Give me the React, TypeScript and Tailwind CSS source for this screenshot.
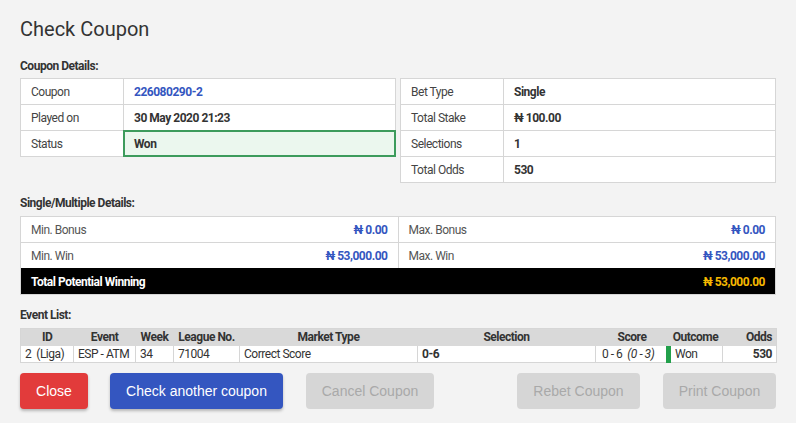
import React from "react";

const cond = "font-['Roboto',sans-serif] tracking-[-0.03em]";

type Row = { k: string; v: React.ReactNode; cls?: string };

function KV({ rows }: { rows: Row[] }) {
  return (
    <div className="border border-[#d6d6d6] bg-white">
      {rows.map((r, i) => (
        <div key={i} className={`flex ${i > 0 ? "h-[26px] border-t border-[#d6d6d6]" : "h-[25px]"}`}>
          <div className="w-[103px] shrink-0 border-r border-[#d6d6d6] px-[10px] flex items-center text-[12px] text-[#444]">{r.k}</div>
          <div className={`flex-1 px-[10px] flex items-center text-[12px] font-bold ${r.cls ?? "text-[#333]"}`}>{r.v}</div>
        </div>
      ))}
    </div>
  );
}

function Money({ label, value }: { label: string; value: string }) {
  return (
    <div className="flex-1 flex items-center justify-between px-[10px]">
      <span className="text-[12px] text-[#555]">{label}</span>
      <span className="text-[12px] font-bold text-[#3456c0]">{value}</span>
    </div>
  );
}

export default function App() {
  const th = "text-[12px] leading-[16px] font-bold text-[#333] px-[4px] py-0 h-[17px]";
  const td = "text-[12px] leading-[16px] text-[#333] px-[4px] py-0 h-[17px] border-l border-[#d6d6d6]";
  return (
    <div className={`w-[796px] h-[423px] bg-[#f3f3f3] px-[20px] ${cond}`}>
      <h1 className="pt-[15px] h-[46px] text-[20px] leading-[28px] text-[#333] font-['Roboto',sans-serif] tracking-normal">Check Coupon</h1>

      <div className="mt-[13px] text-[12px] font-bold text-[#333] leading-[14px]">Coupon Details:</div>
      <div className="mt-[5px] flex gap-[4px] items-start">
        <div className="w-[376px]">
          <div className="border border-[#d6d6d6] bg-white">
            <div className="flex h-[25px]">
              <div className="w-[103px] shrink-0 border-r border-[#d6d6d6] px-[10px] flex items-center text-[12px] text-[#444]">Coupon</div>
              <div className="flex-1 px-[10px] flex items-center text-[12px] font-bold text-[#3456c0]">226080290-2</div>
            </div>
            <div className="flex h-[26px] border-t border-[#d6d6d6]">
              <div className="w-[103px] shrink-0 border-r border-[#d6d6d6] px-[10px] flex items-center text-[12px] text-[#444]">Played on</div>
              <div className="flex-1 px-[10px] flex items-center text-[12px] font-bold text-[#333]">30 May 2020 21:23</div>
            </div>
            <div className="flex h-[26px] border-t border-[#d6d6d6]">
              <div className="w-[103px] shrink-0 border-r border-[#d6d6d6] px-[10px] flex items-center text-[12px] text-[#444]">Status</div>
              <div className="flex-1 px-[10px] flex items-center text-[12px] font-bold text-[#333] bg-[#ebf7ee] outline-2 outline-[#3d9b5c] -outline-offset-1">Won</div>
            </div>
          </div>
        </div>
        <div className="w-[376px]">
          <KV
            rows={[
              { k: "Bet Type", v: "Single" },
              { k: "Total Stake", v: "₦ 100.00" },
              { k: "Selections", v: "1" },
              { k: "Total Odds", v: "530" },
            ]}
          />
        </div>
      </div>

      <div className="mt-[13px] text-[12px] font-bold text-[#333] leading-[14px]">Single/Multiple Details:</div>
      <div className="mt-[6px] border border-[#d6d6d6] bg-white w-[756px]">
        <div className="flex h-[25px]">
          <Money label="Min. Bonus" value="₦ 0.00" />
          <div className="w-px bg-[#d6d6d6]" />
          <Money label="Max. Bonus" value="₦ 0.00" />
        </div>
        <div className="flex h-[26px] border-t border-[#d6d6d6]">
          <Money label="Min. Win" value="₦ 53,000.00" />
          <div className="w-px bg-[#d6d6d6]" />
          <Money label="Max. Win" value="₦ 53,000.00" />
        </div>
        <div className="flex h-[26px] border-t border-black bg-black items-center justify-between px-[10px]">
          <span className="text-[12px] font-bold text-white">Total Potential Winning</span>
          <span className="text-[12px] font-bold text-[#f5b800]">₦ 53,000.00</span>
        </div>
      </div>

      <div className="mt-[13px] text-[12px] font-bold text-[#333] leading-[14px]">Event List:</div>
      <table className="mt-[6px] w-[756px] border border-[#d6d6d6] border-collapse table-fixed">
        <colgroup>
          <col className="w-[53px]" />
          <col className="w-[62px]" />
          <col className="w-[38px]" />
          <col className="w-[66px]" />
          <col className="w-[178px]" />
          <col className="w-[178px]" />
          <col className="w-[73px]" />
          <col className="w-[54px]" />
          <col className="w-[54px]" />
        </colgroup>
        <thead>
          <tr className="bg-[#d9d9d9]">
            <th className={`${th} text-center`}>ID</th>
            <th className={`${th} text-center`}>Event</th>
            <th className={`${th} text-center`}>Week</th>
            <th className={`${th} text-center`}>League No.</th>
            <th className={`${th} text-center`}>Market Type</th>
            <th className={`${th} text-center`}>Selection</th>
            <th className={`${th} text-center`}>Score</th>
            <th className={`${th} text-center`}>Outcome</th>
            <th className={`${th} text-right`}>Odds</th>
          </tr>
        </thead>
        <tbody>
          <tr className="bg-white">
            <td className={`${td} border-l-0`}>2 &nbsp;(Liga)</td>
            <td className={td}>ESP - ATM</td>
            <td className={td}>34</td>
            <td className={td}>71004</td>
            <td className={td}>Correct Score</td>
            <td className={`${td} font-bold`}>0-6</td>
            <td className={`${td} pl-[6px]`}>0 - 6 &nbsp;<i>(0 - 3)</i></td>
            <td className={`${td} border-l-[5px] border-l-[#22a04b]`}>Won</td>
            <td className={`${td} text-right font-bold`}>530</td>
          </tr>
        </tbody>
      </table>

      <div className="mt-[10px] flex font-['Liberation_Sans',Arial,sans-serif] tracking-normal text-[14px]">
        <button className="w-[68px] h-[36px] rounded-[4px] bg-[#e23b3b] text-white shadow-[0_2px_3px_rgba(0,0,0,0.25)]">Close</button>
        <button className="ml-[22px] w-[173px] h-[36px] rounded-[4px] bg-[#3456c0] text-white shadow-[0_2px_3px_rgba(0,0,0,0.25)]">Check another coupon</button>
        <button className="ml-[23px] w-[128px] h-[36px] rounded-[4px] bg-[#d6d6d6] text-[#a9a9a9]">Cancel Coupon</button>
        <button className="ml-[83px] w-[123px] h-[36px] rounded-[4px] bg-[#d6d6d6] text-[#a9a9a9]">Rebet Coupon</button>
        <button className="ml-[23px] w-[113px] h-[36px] rounded-[4px] bg-[#d6d6d6] text-[#a9a9a9]">Print Coupon</button>
      </div>
    </div>
  );
}
